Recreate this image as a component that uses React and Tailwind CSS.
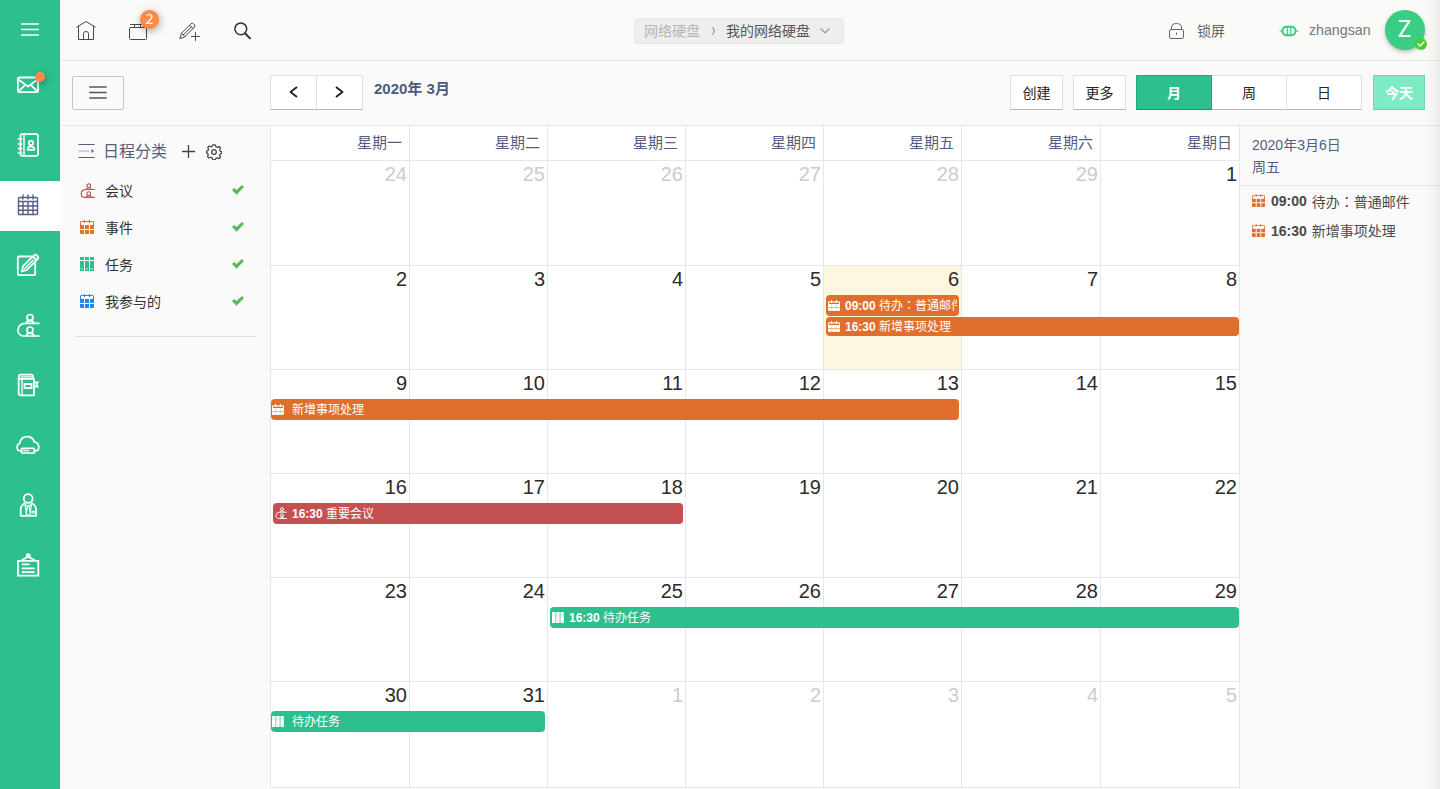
import React from "react";

function Svg({ w, h, sw = 1, children, className = "" }) {
  return (
    <svg
      width={w}
      height={h}
      viewBox={`0 0 ${w} ${h}`}
      fill="none"
      stroke="currentColor"
      strokeWidth={sw}
      strokeLinecap="round"
      strokeLinejoin="round"
      className={`block shrink-0 ${className}`}
    >
      {children}
    </svg>
  );
}

const MenuIcon = () => (
  <Svg w={18} h={13} sw={1.5} className="-mt-px">
    <path d="M.5 1h17M.5 6.5h17M.5 12h17" />
  </Svg>
);

const MailIcon = () => (
  <Svg w={24} h={24} sw={1.8}>
    <rect x="1.900" y="4.500" width="20.200" height="14.700" rx="1.500" />
    <path d="M2 6.200 12 13.500 22 6.200M2.500 18.500l6.500-6.300M21.500 18.500 15 12.200" />
  </Svg>
);

const ContactsIcon = () => (
  <Svg w={24} h={24} sw={1.700}>
    <rect x="4.500" y="1.200" width="17.500" height="21.600" rx="1.800" />
    <path d="M8 1v22M2.300 6h3.500M2.300 11h3.500M2.300 15.500h3.500M2.300 20h3.500" strokeWidth="1.400" />
    <circle cx="15" cy="10" r="2.200" />
    <path d="M11.700 16.800c0-4.600 6.600-4.600 6.600 0z" />
  </Svg>
);

const CalendarIcon = () => (
  <Svg w={22} h={22} sw={1.4}>
    <rect x="1.500" y="3.500" width="19" height="17" rx="1" />
    <path d="M1.500 7.500h19M1.500 12h19M1.500 16.300h19M6 7.500v13M11 7.500v13M16 7.500v13M6 1v4M11 1v4M16 1v4" />
  </Svg>
);

const ComposeIcon = () => (
  <Svg w={24} h={24} sw={1.8}>
    <path d="M15 3.500H3a1.200 1.200 0 0 0-1.200 1.200V21A1.200 1.200 0 0 0 3 22.200h15a1.200 1.200 0 0 0 1.200-1.200V10" />
    <path d="M7 13.200 18.200 2.200a1.600 1.600 0 0 1 2.300 0l1.300 1.300a1.600 1.600 0 0 1 0 2.300L10.700 17l-4.700 1.500zM17 3.500l3.500 3.500" />
    <path d="M8.500 15.700 17.500 6.800" strokeWidth="1.200" />
  </Svg>
);

const meetingShapes = (
  <>
    <circle cx="14" cy="4.500" r="3" />
    <path d="M10.300 10.400c.1-3.800 7.300-3.800 7.400 0" />
    <path d="M23 10.400H9.400C4.800 10.400 2 13.400 2 17c0 3.300 2.200 6 5.500 6H23" />
    <circle cx="14" cy="17" r="3" />
    <path d="M10.300 22.900c.1-3.800 7.300-3.800 7.400 0" />
  </>
);

const MeetingIcon = () => (
  <Svg w={24} h={24} sw={1.7}>
    {meetingShapes}
  </Svg>
);

const MeetingSmall = ({ size }) => (
  <svg
    width={size}
    height={size}
    viewBox="0 0 24 24"
    fill="none"
    stroke="currentColor"
    strokeWidth="1.9"
    strokeLinecap="round"
    className="-mt-px block shrink-0"
  >
    {meetingShapes}
  </svg>
);

const NotebookIcon = () => (
  <Svg w={24} h={24} sw={1.8}>
    <path d="M17 4.300V3.200A1.500 1.500 0 0 0 15.500 1.700h-11A2 2 0 0 0 2.700 3.600V20.500A1.800 1.800 0 0 0 4.500 22.300H18V5.800H4.500A1.800 1.800 0 0 1 2.900 4.300" />
    <path d="M6 6v16M5 3.800h11" strokeWidth="1.300" />
    <path d="M8.500 11h7v4h-7zM18.500 9.500H21.600l-1 2 1 2H18.500" strokeLinejoin="miter" />
  </Svg>
);

const CloudIcon = () => (
  <Svg w={24} h={24} sw={1.7}>
    <path d="M5.500 18H4.500C2.300 18 1.100 16.200 1.100 14.300c0-2 1.100-3.500 2.600-4C4.500 6.400 7.500 3.700 11.300 3.700c3.700 0 6.100 2.300 7 5.100 2.500.4 4.500 2.600 4.500 5.200 0 2.300-1.500 4-3.600 4H18.500" />
    <rect x="5.500" y="15.300" width="13" height="4.700" rx=".8" />
    <path d="M8 17.600h.2M10 17.600h.2M12 17.600h.2" />
  </Svg>
);

const PersonIcon = () => (
  <Svg w={24} h={24} sw={1.8}>
    <circle cx="12.200" cy="5.500" r="4.400" />
    <path d="M8.800 10.200C5.500 11.700 4.700 14.500 4.700 17v5.800H20V17c0-2.500-.9-5.300-4.200-6.800" />
    <path d="M9.300 11.500l2.900 2 2.900-2M11.300 14l-1.200 7 2.100 1.800 2.100-1.800-1.200-7M9 12l1.500 9M15.400 12l-1.500 9M16 18.300h3.300v1.700H16z" strokeWidth="1.200" />
  </Svg>
);

const BoardIcon = () => (
  <Svg w={24} h={24} sw={1.8}>
    <path d="M1.900 7.800h20.400v14.800H1.900zM5.500 7.500 12.200 3.500l6.700 4" strokeLinejoin="miter" />
    <circle cx="12.200" cy="2.700" r="1.600" fill="currentColor" />
    <path d="M6.500 11.300h6.500M6.500 15.300h11.500M6.500 19.200h11.500" />
  </Svg>
);

const SmallCalendar = ({ size = 14 }) => (
  <svg width={size} height={size} viewBox="0 0 14 14" fill="currentColor" className="-mt-px block shrink-0">
    <path d="M0 5V3Q0 1 1.500 1H12.500Q14 1 14 3V5H13V2.500Q13 2 12.400 2H1.600Q1 2 1 2.500V5Z" />
    <path d="M4 0h1v3H4zM9 0h1v3H9z" />
    <path d="M0 5h4v4H0zM5 5h4v4H5zM10 5h4v4h-4zM0 10h4v4H1.200Q0 14 0 13zM5 10h4v4H5zM10 10h4v3q0 1-1.200 1H10z" />
  </svg>
);

const EventCalendar = () => (
  <svg width="12" height="12" viewBox="0 0 12 12" fill="currentColor" className="block shrink-0">
    <path d="M0 4V2.500Q0 1.200 1.200 1.200H3V0H4V1.200H8V0H9V1.200H10.800Q12 1.200 12 2.500V4H11V2.400H9V3H8V2.400H4V3H3V2.400H1V4Z" />
    <path d="M0 4h12v3.500H0zM0 8h12v1.800q0 1.200-1.200 1.200H1.200Q0 11 0 9.800z" />
    <path d="M3.700 4v7M8.300 4v7" stroke="#e06e2c" strokeOpacity=".45" strokeWidth=".6" />
  </svg>
);

const BindersIcon = ({ size = 14, gap = "#fafafa" }) => (
  <svg width={size} height={size} viewBox="0 0 14 14" fill="currentColor" className="-mt-px block shrink-0">
    <path d="M0 0h4v14H0zM5 0h4v14H5zM10 0h4v14h-4z" />
    <path d="M0 3h14v1H0zM1.500 11h1v1.500h-1zM6.500 11h1v1.500h-1zM11.500 11h1v1.500h-1z" fill={gap} />
  </svg>
);

const EventBinders = () => (
  <svg width="12" height="12" viewBox="0 0 12 12" fill="currentColor" className="block shrink-0">
    <path d="M0 0h3.500v11H0zM4.200 0h3.500v11H4.200zM8.400 0h3.500v11H8.400z" />
    <path d="M0 2.500h12v.7H0zM1.300 9h1v1h-1zM5.500 9h1v1h-1zM9.700 9h1v1h-1z" fill="#a5e5d0" />
  </svg>
);

const CheckIcon = () => (
  <svg width="12" height="10" viewBox="0 0 12 10" fill="#5cb85c" className="-mt-px block shrink-0">
    <path d="M0 5 2.200 2.900 4.500 5 9.900 0 12 2.100 4.500 9.700Z" />
  </svg>
);

const navItems = [
  { icon: <MailIcon />, dot: true },
  { icon: <ContactsIcon /> },
  { icon: <CalendarIcon />, active: true },
  { icon: <ComposeIcon /> },
  { icon: <MeetingIcon /> },
  { icon: <NotebookIcon /> },
  { icon: <CloudIcon /> },
  { icon: <PersonIcon /> },
  { icon: <BoardIcon /> },
];

function NavRail() {
  return (
    <nav className="flex w-[60px] shrink-0 flex-col bg-[#2ebf8f] text-white">
      <div className="flex h-[60px] items-center justify-center">
        <MenuIcon />
      </div>
      <div className="flex flex-col gap-[10px]">
        {navItems.map((item, i) => (
          <div
            key={i}
            className={
              item.active
                ? "relative mt-px -mb-px flex h-[50px] items-center justify-center bg-white pr-1 pb-[2px] text-[#565d85]"
                : "relative flex h-[50px] items-center justify-center pr-1"
            }
          >
            {item.icon}
            {item.dot && (
              <span className="absolute top-[12px] left-[35px] size-[10px] rounded-full bg-[#ff8a48] shadow-[1px_2px_6px_rgba(0,0,0,0.35)]" />
            )}
          </div>
        ))}
      </div>
    </nav>
  );
}

function TopBar() {
  return (
    <header className="flex h-[61px] items-center border-b border-[#e7e7e7] bg-[#fafaf8] pt-px text-sm text-[#666]">
      <div className="flex w-[574px] items-center pl-4 text-[#4a4a4a]">
        <Svg w={20} h={20} className="-mt-px">
          <path d="M.7 7.200 10 1.500l9.300 5.700M2.500 6v13.500h15V6" />
          <path d="M7.500 19.500v-6q0-2 2.500-2t2.500 2v6" />
        </Svg>
        <div className="relative ml-8">
          <Svg w={20} h={20}>
            <rect x="1.500" y="6.500" width="17" height="12" rx="1" />
            <path d="M2.500 3.500h15M6.500 3.500v3M12.500 3.500v3" />
          </Svg>
          <span className="absolute -top-[11px] left-[12px] flex size-[19px] items-center justify-center rounded-full bg-[#ff8a48] font-['Noto_Sans'] text-[14px] leading-none text-white shadow-[1px_2px_8px_rgba(0,0,0,0.35)]">
            2
          </span>
        </div>
        <Svg w={22} h={20} className="ml-[31px]">
          <path d="M1 17.300 2.500 12.200 12 2.700q1.200-1 2.400 0l1 1q1 1.200 0 2.400L6 15.600ZM10.700 4.200l3.300 3.300M2.500 12.200l3.500 3.400M4.300 13.900l8.200-8.200" />
          <path d="M16.500 11.500v8M12.500 15.500h8" />
        </Svg>
        <Svg w={17} h={18} sw={1.500} className="mt-px ml-[33px] text-[#333]">
          <circle cx="6.800" cy="6.800" r="5.900" />
          <path d="m11 11.200 5 5.200" strokeWidth="2" />
        </Svg>
      </div>
      <div className="flex h-[26px] w-[210px] items-center rounded border border-[#e6e6e6] bg-[#eee] pl-[9px] text-[#b5b5b5]">
        <span>网络硬盘</span>
        <Svg w={4} h={8} sw={1.200} className="ml-[12px] mt-px text-[#999]">
          <path d="M.7.7q3 3.300 0 6.600" />
        </Svg>
        <span className="ml-[10px] text-[#555]">我的网络硬盘</span>
        <Svg w={10} h={6} sw={1.200} className="ml-[10px] text-[#999]">
          <path d="m.8.8 4.200 4 4.200-4" />
        </Svg>
      </div>
      <div className="-mt-px ml-[325px] flex items-center">
        <Svg w={16} h={18} className="mt-px text-[#666]">
          <rect x=".5" y="7.500" width="14" height="9" rx="1.500" />
          <path d="M2.500 7.500V6q0-4.500 5-4.500t5 4.500v1.500M7.500 11v1.500" />
        </Svg>
        <span className="mt-[2px] ml-3">锁屏</span>
        <Svg w={20} h={12} sw={2} className="mt-[2px] ml-[54px] text-[#3acb82]">
          <rect x="3.500" y="1.800" width="13" height="8.400" rx="4" />
          <path d="M1 6h2.500M16.500 6H19M8.300 2v8M11.700 2v8" strokeWidth="1.200" />
        </Svg>
        <span className="mt-px ml-[10px] text-[14.200px] text-[#777]">zhangsan</span>
        <div className="relative ml-[14px] flex size-10 items-center justify-center rounded-full bg-[#3acd84] pb-[2px] font-['Noto_Sans'] text-[23.500px] text-white shadow-[0_2px_4px_rgba(0,0,0,0.25)]">
          Z
          <span className="absolute right-[-2px] bottom-0 flex size-3 items-center justify-center rounded-full bg-[#46cf35]">
            <Svg w={8} h={6} sw={1.300}>
              <path d="m1 3 2 2 4-4" />
            </Svg>
          </span>
        </div>
      </div>
    </header>
  );
}

function Toolbar() {
  return (
    <div className="flex h-[65px] items-start border-b border-[#e7e7e7] pt-[14px] text-sm text-[#222]">
      <div className="mt-px ml-3 flex h-[34px] w-[52px] items-center justify-center rounded-[2px] border border-[#c5c5c5] text-[#555]">
        <Svg w={18} h={13} sw={1.400} className="-mt-px">
          <path d="M.8 1h16.400M.8 6.500h16.400M.8 12h16.400" />
        </Svg>
      </div>
      <div className="ml-[146px] flex h-[35px] w-[93px] border border-[#e0e0e0] border-b-[#bbb] bg-white">
        <div className="flex w-[46px] items-center justify-center border-r border-[#e0e0e0]">
          <Svg w={9} h={12} sw={1.900} className="-mt-[2px]">
            <path d="M8 1 1.500 6 8 11" strokeLinecap="butt" />
          </Svg>
        </div>
        <div className="flex flex-1 items-center justify-center">
          <Svg w={9} h={12} sw={1.900} className="-mt-[2px]">
            <path d="m1 1 6.500 5L1 11" strokeLinecap="butt" />
          </Svg>
        </div>
      </div>
      <div className="ml-[11px] w-[636px] pt-1 text-[15px] leading-5 font-bold text-[#4f5a80]">2020年 3月</div>
      <div className="flex h-[35px] w-[53px] items-center justify-center border border-[#e0e0e0] border-b-[#bbb] bg-white">创建</div>
      <div className="ml-[10px] flex h-[35px] w-[53px] items-center justify-center border border-[#e0e0e0] border-b-[#bbb] bg-white">更多</div>
      <div className="ml-[10px] flex">
        <div className="flex h-[35px] w-[76px] items-center justify-center border border-[#25a87c] border-b-[#1f9069] bg-[#2ebf8f] font-bold text-white">月</div>
        <div className="flex h-[35px] w-[75px] items-center justify-center border-t border-r border-b border-[#e0e0e0] border-b-[#bbb] bg-white">周</div>
        <div className="flex h-[35px] w-[75px] items-center justify-center border-t border-r border-b border-[#e0e0e0] border-b-[#bbb] bg-white">日</div>
      </div>
      <div className="ml-[11px] flex h-[35px] w-[52px] items-center justify-center border border-[#70dab5] border-b-[#66cba8] bg-[#7eebc5] font-bold text-white">今天</div>
    </div>
  );
}

const categories = [
  { label: "会议", icon: <MeetingSmall size={15} />, color: "text-[#c75151]" },
  { label: "事件", icon: <SmallCalendar />, color: "text-[#e06e2c]" },
  { label: "任务", icon: <BindersIcon />, color: "text-[#2ebf8f]" },
  { label: "我参与的", icon: <SmallCalendar />, color: "text-[#1e86f5]" },
];

function CategoryPanel() {
  return (
    <aside className="w-[210px] shrink-0">
      <div className="flex h-[46px] items-center pt-[5px] pl-[18px] text-[#565d80]">
        <Svg w={17} h={16} className="-mt-px">
          <path d="M.5 1.500h16M.5 14.500h16" strokeLinecap="butt" />
          <path d="M.5 8h11" strokeOpacity=".5" strokeLinecap="butt" />
          <path d="m13.500 6 2.500 2-2.500 2z" fill="currentColor" stroke="none" />
        </Svg>
        <span className="ml-[8px] text-[16px] leading-5">日程分类</span>
        <Svg w={13} h={13} sw={1.300} className="ml-[15px] text-[#444]">
          <path d="M6.500 0v13M0 6.500h13" strokeLinecap="butt" />
        </Svg>
        <svg
          width="16"
          height="16"
          viewBox="0 0 18 18"
          fill="none"
          stroke="currentColor"
          strokeWidth="1.4"
          strokeLinejoin="round"
          className="ml-[11px] block shrink-0 text-[#444]"
        >
          <path d="M7.500 1h3l.6 2.100 1.700.7 1.900-1 1.700 1.700-1 1.900.7 1.700 1.400.4v2.200l-1.600.6-.6 1.600 1 2-1.700 1.700-1.900-1-1.700.7-.6 1.500h-2.800L7 15.600l-1.700-.7-2 .9-1.600-1.600.9-2-.7-1.600L.7 10V7.900l1.500-.5.700-1.600-1-2L3.500 2.300l1.900.9 1.600-.6z" />
          <circle cx="9" cy="9" r="2.600" />
        </svg>
      </div>
      <ul className="pl-5 pr-[26px] text-sm text-[#333]">
        {categories.map((c) => (
          <li key={c.label} className="flex h-[37px] items-center">
            <span className={`w-[25px] ${c.color}`}>{c.icon}</span>
            <span className="flex-1">{c.label}</span>
            <CheckIcon />
          </li>
        ))}
      </ul>
      <div className="mx-[15px] mt-4 h-px bg-[#d2e2dc]" />
    </aside>
  );
}

const weekdays = ["星期一", "星期二", "星期三", "星期四", "星期五", "星期六", "星期日"];

const weeks = [
  { days: [24, 25, 26, 27, 28, 29, 1], muted: [0, 5], height: "h-[105px]", events: [] },
  {
    days: [2, 3, 4, 5, 6, 7, 8],
    today: 4,
    height: "h-[104px]",
    events: [
      { box: "top-[29px] left-[555px] w-[133px] h-[21px] pl-[2px] bg-[#e06e2c]", kind: "event", time: "09:00", title: "待办：普通邮件" },
      { box: "top-[51px] left-[555px] w-[413px] h-[19px] pl-[2px] bg-[#e06e2c]", kind: "event", time: "16:30", title: "新增事项处理" },
    ],
  },
  {
    days: [9, 10, 11, 12, 13, 14, 15],
    height: "h-[104px]",
    events: [{ box: "top-[29px] left-0 w-[688px] h-[21px] pl-px bg-[#e06e2c]", kind: "event", title: "新增事项处理" }],
  },
  {
    days: [16, 17, 18, 19, 20, 21, 22],
    height: "h-[104px]",
    events: [{ box: "top-[29px] left-[2px] w-[410px] h-[21px] pl-[2px] bg-[#c55052]", kind: "meeting", time: "16:30", title: "重要会议" }],
  },
  {
    days: [23, 24, 25, 26, 27, 28, 29],
    height: "h-[104px]",
    events: [{ box: "top-[29px] left-[279px] w-[689px] h-[21px] pl-[2px] bg-[#2ebf8f]", kind: "task", time: "16:30", title: "待办任务" }],
  },
  {
    days: [30, 31, 1, 2, 3, 4, 5],
    muted: [2, 6],
    height: "h-[106px]",
    events: [{ box: "top-[29px] left-0 w-[274px] h-[21px] pl-px bg-[#2ebf8f]", kind: "task", title: "待办任务" }],
  },
];

const gridCols = "grid grid-cols-[139px_138px_138px_138px_138px_139px_139px]";

// Keeps the full-width colon centred in its em box.
function Title({ text }) {
  const [head, tail] = text.split("：");
  if (tail === undefined) return text;
  return (
    <>
      {head}
      <span className="font-['Noto_Sans_CJK_TC']" lang="zh-TW">：</span>
      {tail}
    </>
  );
}

function EventBar({ event }) {
  return (
    <div className={`absolute flex items-center overflow-hidden rounded pr-[2px] text-[12px] whitespace-nowrap text-white ${event.box}`}>
      {event.kind === "event" && <EventCalendar />}
      {event.kind === "meeting" && <MeetingSmall size={12} />}
      {event.kind === "task" && <EventBinders />}
      {event.time ? (
        <span className="ml-[5px] min-w-0 flex-1 overflow-hidden leading-[18px]">
          <b>{event.time}</b> <Title text={event.title} />
        </span>
      ) : (
        <span className="ml-[8px]">{event.title}</span>
      )}
    </div>
  );
}

function MonthGrid() {
  return (
    <main className="w-[970px] shrink-0 self-start border-l border-[#e7e7e7] bg-white">
      <div className={`${gridCols} h-[35px] text-[15px] text-[#565d80]`}>
        {weekdays.map((d) => (
          <div key={d} className="flex items-center justify-end border-r border-b border-[#e7e7e7] pt-px pr-[7px]">
            {d}
          </div>
        ))}
      </div>
      {weeks.map((w, wi) => (
        <div key={wi} className={`relative ${gridCols} ${w.height}`}>
          {w.days.map((d, i) => {
            const muted = w.muted && i >= w.muted[0] && i <= w.muted[1];
            return (
              <div
                key={i}
                className={`border-r border-b border-[#e7e7e7] pr-[2px] text-right text-[20px] leading-[26px] ${
                  muted ? "text-[#ccc]" : "text-[#2b2b2b]"
                } ${w.today === i ? "bg-[#fdf6e1]" : ""}`}
              >
                {d}
              </div>
            );
          })}
          {w.events.map((e, i) => (
            <EventBar key={i} event={e} />
          ))}
        </div>
      ))}
    </main>
  );
}

const agenda = [
  { time: "09:00", title: "待办：普通邮件" },
  { time: "16:30", title: "新增事项处理" },
];

function AgendaPanel() {
  return (
    <aside className="flex-1 text-sm">
      <div className="h-[60px] border-b border-[#e7e7e7] pt-2 pl-3 leading-[22px] text-[#565d80]">
        <div>2020年3月6日</div>
        <div>周五</div>
      </div>
      <ul className="text-[#4a4a4a]">
        {agenda.map((a) => (
          <li key={a.time} className="flex h-[30px] items-center pl-3">
            <span className="mr-[6px] text-[#e06e2c]">
              <SmallCalendar size={13} />
            </span>
            <b className="mr-[5px]">{a.time}</b>
            <span>
              <Title text={a.title} />
            </span>
          </li>
        ))}
      </ul>
    </aside>
  );
}

export default function App() {
  return (
    <div className="relative flex h-[789px] w-[1440px] overflow-hidden bg-[#fafafa] font-['Liberation_Sans','Noto_Sans_CJK_SC',sans-serif]">
      <NavRail />
      <div className="flex min-w-0 flex-1 flex-col">
        <TopBar />
        <Toolbar />
        <div className="flex flex-1">
          <CategoryPanel />
          <MonthGrid />
          <AgendaPanel />
        </div>
      </div>
      <div className="pointer-events-none absolute inset-y-0 right-0 w-[14px] bg-linear-to-r from-transparent to-black/6" />
    </div>
  );
}
